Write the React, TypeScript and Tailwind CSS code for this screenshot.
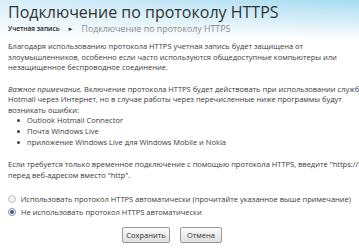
export default function App() {
  const line = 'whitespace-nowrap h-[10.5px] leading-[10.5px]';
  return (
    <div className="w-[359px] h-[250px] overflow-hidden bg-white font-['Open_Sans',sans-serif] text-[#3a3a3a]">
      {/* Header */}
      <div className="h-[40px] px-[8px] pt-[2px] bg-[linear-gradient(to_bottom,rgba(255,255,255,0)_0%,#ffffff_100%),linear-gradient(to_right,#d8eff9,#a6dbf1)]">
        <h1 className="text-[16px] leading-[20px] text-[#333] whitespace-nowrap">Подключение по протоколу HTTPS</h1>
        <div className="mt-[2px] flex items-center gap-[8px] leading-[10px] whitespace-nowrap">
          <span className="text-[6.5px] font-semibold text-[#222]">Учетная запись</span>
          <span className="text-[6px] text-[#333]">►</span>
          <span className="text-[8.8px] text-[#8a8a8a]">Подключение по протоколу HTTPS</span>
        </div>
      </div>

      <div className="px-[8px] text-[7.5px]">
        <div className="mt-[1px]">
          <div className={line}>Благодаря использованию протокола HTTPS учетная запись будет защищена от</div>
          <div className={line}>злоумышленников, особенно если часто используются общедоступные компьютеры или</div>
          <div className={line}>незащищенное беспроводное соединение.</div>
        </div>

        <div className="mt-[11px]">
          <div className={line}>
            <i>Важное примечание.</i> Включение протокола HTTPS будет действовать при использовании службы
          </div>
          <div className={line}>Hotmail через Интернет, но в случае работы через перечисленные ниже программы будут</div>
          <div className={line}>возникать ошибки:</div>
          <ul className="pl-[9px]">
            {['Outlook Hotmail Connector', 'Почта Windows Live', 'приложение Windows Live для Windows Mobile и Nokia'].map((t) => (
              <li key={t} className={`${line} h-[11px] flex items-center gap-[7px]`}>
                <span className="w-[3px] h-[3px] rounded-full bg-[#444]" />
                {t}
              </li>
            ))}
          </ul>
        </div>

        <div className="mt-[11px]">
          <div className={line}>Если требуется только временное подключение с помощью протокола HTTPS, введите "https://"</div>
          <div className={line}>перед веб-адресом вместо "http".</div>
        </div>

        <div className="mt-[14px] flex flex-col gap-[2px]">
          <label className={`${line} flex items-center gap-[5px]`}>
            <span className="w-[8px] h-[8px] rounded-full border border-[#c2c2c2] bg-[#f2f2f2]" />
            Использовать протокол HTTPS автоматически (прочитайте указанное выше примечание)
          </label>
          <label className={`${line} flex items-center gap-[5px]`}>
            <span className="w-[8px] h-[8px] rounded-full border border-[#8a8a8a] bg-white flex items-center justify-center">
              <span className="w-[4px] h-[4px] rounded-full bg-[#2b5d9c]" />
            </span>
            Не использовать протокол HTTPS автоматически
          </label>
        </div>

        <div className="mt-[10px] flex gap-[10px] pl-[114px]">
          <button className="h-[16px] w-[48px] text-[7.5px] leading-[14px] border border-[#9a9a9a] rounded-[2px] bg-[linear-gradient(to_bottom,#fafafa,#e0e0e0)] text-[#333]">
            Сохранить
          </button>
          <button className="h-[16px] w-[42px] text-[7.5px] leading-[14px] border border-[#9a9a9a] rounded-[2px] bg-[linear-gradient(to_bottom,#fafafa,#e0e0e0)] text-[#333]">
            Отмена
          </button>
        </div>
      </div>
    </div>
  );
}
